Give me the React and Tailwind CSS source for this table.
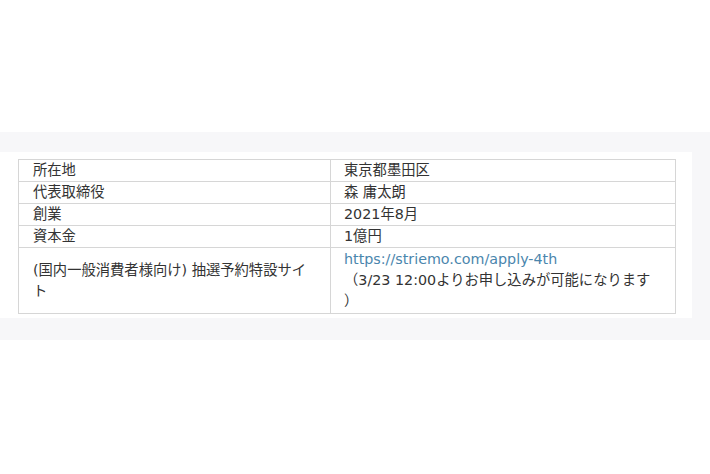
const rows = [
  { label: "所在地", value: "東京都墨田区" },
  { label: "代表取締役", value: "森 庸太朗" },
  { label: "創業", value: "2021年8月" },
  { label: "資本金", value: "1億円" },
];

export default function App() {
  return (
    <div
      className="w-[710px] h-[474px] bg-white text-[#333] text-[14.3px] leading-[21px]"
      style={{ fontFamily: '"DejaVu Sans", "Noto Sans CJK JP", sans-serif' }}
    >
      <div className="h-[132px]" />
      <div className="h-[208px] bg-[#f7f7f9] pt-[20px]">
        <div className="w-[692px] h-[166px] bg-white pl-[18px] pt-[7px]">
          <table className="w-[658px] border-collapse border border-[#d6d6d6] table-fixed">
            <colgroup>
              <col className="w-[312px]" />
              <col />
            </colgroup>
            <tbody>
              {rows.map((r) => (
                <tr key={r.label}>
                  <td className="border border-[#d6d6d6] pl-[14px] pr-[16px] py-0 align-middle">
                    {r.label}
                  </td>
                  <td className="border border-[#d6d6d6] pl-[13px] pr-[22px] py-0 align-middle">
                    {r.value}
                  </td>
                </tr>
              ))}
              <tr>
                <td className="border border-[#d6d6d6] pl-[14px] pr-[16px] py-px align-middle">
                  (国内一般消費者様向け) 抽選予約特設サイト
                </td>
                <td className="border border-[#d6d6d6] pl-[13px] pr-[22px] py-px align-middle">
                  <a href="#" className="text-[#4a86ad]">
                    https://striemo.com/apply-4th
                  </a>
                  <br />
                  <span className="[line-break:anywhere]">
                    （3/23 12:00よりお申し込みが可能になります）
                  </span>
                </td>
              </tr>
            </tbody>
          </table>
        </div>
      </div>
    </div>
  );
}
